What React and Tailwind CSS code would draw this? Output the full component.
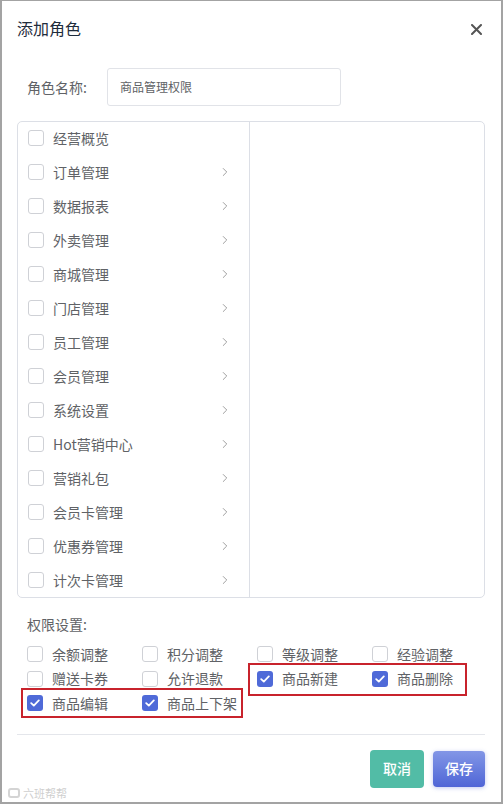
import { ChevronRight } from 'lucide-react';

const MENUS = [
  { name: '经营概览', sub: false },
  { name: '订单管理', sub: true },
  { name: '数据报表', sub: true },
  { name: '外卖管理', sub: true },
  { name: '商城管理', sub: true },
  { name: '门店管理', sub: true },
  { name: '员工管理', sub: true },
  { name: '会员管理', sub: true },
  { name: '系统设置', sub: true },
  { name: 'Hot营销中心', sub: true },
  { name: '营销礼包', sub: true },
  { name: '会员卡管理', sub: true },
  { name: '优惠券管理', sub: true },
  { name: '计次卡管理', sub: true },
];

const PERMS = [
  { name: '余额调整', on: false },
  { name: '积分调整', on: false },
  { name: '等级调整', on: false },
  { name: '经验调整', on: false },
  { name: '赠送卡券', on: false },
  { name: '允许退款', on: false },
  { name: '商品新建', on: true },
  { name: '商品删除', on: true },
  { name: '商品编辑', on: true },
  { name: '商品上下架', on: true },
];

function Box({ on }) {
  if (on) {
    return (
      <span className="w-[16px] h-[16px] rounded-[3px] bg-[#4f6ad8] flex items-center justify-center shrink-0">
        <svg width="10" height="8" viewBox="0 0 10 8" fill="none">
          <path d="M1.2 4.2 L3.8 6.6 L8.8 1.4" stroke="white" strokeWidth="1.8" strokeLinecap="round" strokeLinejoin="round" />
        </svg>
      </span>
    );
  }
  return <span className="w-[16px] h-[16px] rounded-[3px] border border-[#cfd1d6] bg-white shrink-0" />;
}

export default function App() {
  return (
    <div
      className="relative w-[503px] h-[804px] bg-white border-l-2 border-r-2 border-b-2 border-t border-[#a3a3a3] pl-[15px] pr-[16px] overflow-hidden"
      style={{ fontFamily: '"Noto Sans CJK SC", "Noto Sans", sans-serif' }}
    >
      {/* Header */}
      <div className="flex items-center justify-between pt-[15px] h-[39px]">
        <h2 className="text-[16px] leading-[24px] text-[#1f2d3d]">添加角色</h2>
        <svg width="11" height="11" viewBox="0 0 11 11" className="mr-[3px] mt-[2px]">
          <path d="M1 1 L10 10 M10 1 L1 10" stroke="#555" strokeWidth="2" strokeLinecap="round" />
        </svg>
      </div>

      {/* Role name */}
      <div className="flex items-center mt-[28px] pl-[10px]">
        <span className="w-[80px] text-[14px] text-[#606266]">角色名称:</span>
        <div className="w-[234px] h-[38px] border border-[#e1e3e8] rounded-[3px] flex items-center pl-[12px] text-[12px] text-[#606266]">
          商品管理权限
        </div>
      </div>

      {/* Menu tree */}
      <div className="mt-[15px] h-[477px] border border-[#dcdfe6] rounded-[5px] flex overflow-hidden">
        <div className="w-[232px] border-r border-[#dcdfe6] -mt-[1px]">
          {MENUS.map(m => (
            <div key={m.name} className="h-[34px] flex items-center pl-[10px] pr-[17px]">
              <Box on={false} />
              <span className="ml-[9px] flex-1 text-[14px] text-[#606266]">{m.name}</span>
              {m.sub && <ChevronRight size={14} strokeWidth={1.4} className="text-[#8a8a8a]" />}
            </div>
          ))}
        </div>
        <div className="flex-1" />
      </div>

      {/* Permissions */}
      <div className="mt-[16px] pl-[10px] text-[14px] leading-[20px] text-[#606266]">权限设置:</div>
      <div className="relative mt-[8px] grid grid-cols-[115px_115px_115px_115px] auto-rows-[24.5px] pl-[10px]">
        {PERMS.map(p => (
          <div key={p.name} className="flex items-center">
            <Box on={p.on} />
            <span className="ml-[9px] text-[14px] text-[#606266]">{p.name}</span>
          </div>
        ))}
        <div className="absolute left-[231px] top-[21px] w-[219px] h-[33px] border-2 border-[#c8232c]" />
        <div className="absolute left-[4px] top-[46px] w-[222px] h-[30px] border-2 border-[#c8232c]" />
      </div>

      {/* Footer */}
      <div className="mt-[18px] border-t border-[#e4e6eb]" />
      <div className="mt-[15px] flex justify-end items-center gap-[9px]">
        <button className="w-[54px] h-[38px] rounded-[4px] bg-[#52bca6] text-white text-[14px] font-medium">取消</button>
        <button className="w-[52px] h-[36px] rounded-[4px] bg-gradient-to-b from-[#8396e6] to-[#5065d6] text-white text-[14px] font-medium shadow-[0_1px_4px_rgba(80,100,214,0.35)]">保存</button>
      </div>

      {/* Watermark */}
      <div className="absolute left-[6px] bottom-[3px] flex items-center gap-[3px] text-[#cfcfcf] text-[11px] leading-[12px]">
        <span className="w-[12px] h-[10px] border-2 border-[#d4d4d4] rounded-[3px]" />
        <span>六班帮帮</span>
      </div>
    </div>
  );
}
